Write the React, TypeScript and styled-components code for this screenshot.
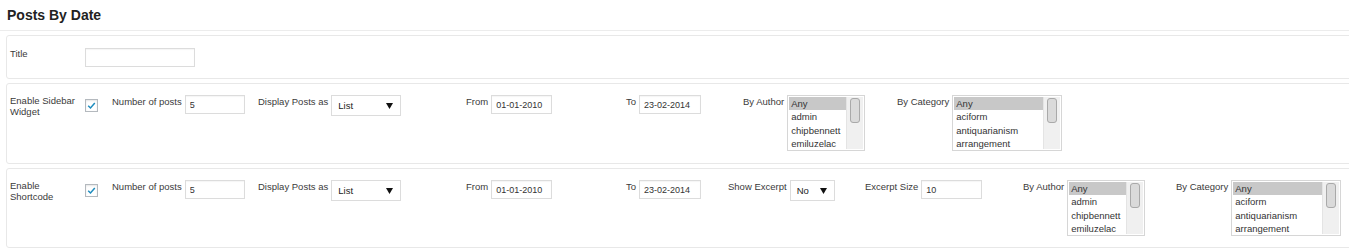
import React from "react";
import styled, { createGlobalStyle } from "styled-components";

const GlobalStyle = createGlobalStyle`
  html, body {
    margin: 0;
    padding: 0;
    background: #fff;
    overflow: hidden;
  }
  body {
    font-family: "Liberation Sans", Arial, sans-serif;
    color: #333;
  }
`;

const Page = styled.div`
  width: 100%;
`;

const Heading = styled.h2`
  margin: 0;
  height: 30px;
  line-height: 30px;
  padding-left: 7px;
  font-size: 14px;
  font-weight: bold;
  color: #222;
  border-bottom: 1px solid #ececec;
`;

const Panels = styled.div`
  display: flex;
  flex-direction: column;
  gap: 4px;
  padding: 4px 0 0 6px;
`;

const Panel = styled.div<{ $top: number; $bottom: number }>`
  width: 1370px;
  box-sizing: border-box;
  border: 1px solid #e8e8e8;
  border-radius: 3px;
  padding: ${(p) => p.$top}px 0 ${(p) => p.$bottom}px 3px;
  display: flex;
  align-items: flex-start;
`;

const RowLabel = styled.div`
  flex: 0 0 75px;
  width: 75px;
  padding-right: 5px;
  box-sizing: border-box;
  font-size: 9.5px;
  line-height: 10.7px;
  padding-top: 1px;
  color: #3a3a3a;
`;

const CheckCell = styled.div`
  flex: 0 0 27px;
  padding-top: 4px;
`;

const CheckBox = styled.span`
  display: flex;
  align-items: center;
  justify-content: center;
  width: 13px;
  height: 13px;
  box-sizing: border-box;
  border: 1px solid #b4b9be;
  background: #fff;
  box-shadow: inset 0 1px 2px rgba(0, 0, 0, 0.1);
`;

const Field = styled.div<{ $w?: number }>`
  display: flex;
  align-items: flex-start;
  gap: 3px;
  ${(p) => (p.$w ? `flex: 0 0 ${p.$w}px;` : "flex: 1 1 auto;")}
`;

const FieldLabel = styled.span`
  font-size: 9.5px;
  line-height: 11px;
  padding-top: 1px;
  white-space: nowrap;
  color: #3a3a3a;
`;

const TextInput = styled.input<{ $w: number }>`
  width: ${(p) => p.$w}px;
  height: 19px;
  box-sizing: border-box;
  margin: 0;
  padding: 0 4px;
  border: 1px solid #dcdcdc;
  box-shadow: inset 0 1px 1px rgba(0, 0, 0, 0.04);
  font-family: "Liberation Sans", Arial, sans-serif;
  font-size: 9px;
  color: #333;
  outline: none;
  background: #fff;
`;

const SelectBox = styled.div<{ $w: number }>`
  width: ${(p) => p.$w}px;
  height: 21px;
  box-sizing: border-box;
  border: 1px solid #dcdcdc;
  display: flex;
  align-items: center;
  justify-content: space-between;
  padding: 0 7px 0 6px;
  font-size: 9.5px;
  color: #222;
  background: #fff;
`;

const ListBox = styled.div<{ $w: number }>`
  width: ${(p) => p.$w}px;
  height: 56px;
  box-sizing: border-box;
  border: 1px solid #d6d6d6;
  padding: 1px;
  display: flex;
  background: #fff;
`;

const Options = styled.div`
  flex: 1 1 auto;
  display: flex;
  flex-direction: column;
`;

const Option = styled.div<{ $selected?: boolean }>`
  height: 13.3px;
  line-height: 13.3px;
  padding-left: 2px;
  font-size: 9.5px;
  color: #333;
  white-space: nowrap;
  background: ${(p) => (p.$selected ? "#c8c8c8" : "transparent")};
`;

const ScrollTrack = styled.div`
  flex: 0 0 16px;
  background: #f0f0f0;
  border-left: 1px solid #e4e4e4;
  display: flex;
  justify-content: center;
  padding-top: 1px;
`;

const ScrollThumb = styled.div`
  width: 10px;
  height: 25px;
  box-sizing: border-box;
  border: 1px solid #a9a9a9;
  border-radius: 3px;
  background: #dadada;
`;

const Check = () => (
  <svg width="9" height="9" viewBox="0 0 9 9">
    <polyline points="1.2,4.8 3.5,7 7.8,2" fill="none" stroke="#1e8cbe" strokeWidth="1.5" />
  </svg>
);

const Arrow = () => (
  <svg width="7" height="6" viewBox="0 0 7 6">
    <polygon points="0,0 7,0 3.5,6" fill="#111" />
  </svg>
);

const Select = ({ w, value }: { w: number; value: string }) => (
  <SelectBox $w={w}>
    <span>{value}</span>
    <Arrow />
  </SelectBox>
);

const List = ({ w, items }: { w: number; items: string[] }) => (
  <ListBox $w={w}>
    <Options>
      {items.map((it, i) => (
        <Option key={it} $selected={i === 0}>
          {it}
        </Option>
      ))}
    </Options>
    <ScrollTrack>
      <ScrollThumb />
    </ScrollTrack>
  </ListBox>
);

const authors = ["Any", "admin", "chipbennett", "emiluzelac"];
const categories = ["Any", "aciform", "antiquarianism", "arrangement"];

export default function App() {
  return (
    <Page>
      <GlobalStyle />
      <Heading>Posts By Date</Heading>
      <Panels>
        <Panel $top={12} $bottom={11}>
          <RowLabel>Title</RowLabel>
          <TextInput $w={110} defaultValue="" />
        </Panel>

        <Panel $top={11} $bottom={12}>
          <RowLabel>Enable Sidebar Widget</RowLabel>
          <CheckCell>
            <CheckBox>
              <Check />
            </CheckBox>
          </CheckCell>
          <Field $w={146}>
            <FieldLabel>Number of posts</FieldLabel>
            <TextInput $w={60} defaultValue="5" />
          </Field>
          <Field $w={208}>
            <FieldLabel>Display Posts as</FieldLabel>
            <Select w={70} value="List" />
          </Field>
          <Field $w={160}>
            <FieldLabel>From</FieldLabel>
            <TextInput $w={61} defaultValue="01-01-2010" />
          </Field>
          <Field $w={117}>
            <FieldLabel>To</FieldLabel>
            <TextInput $w={62} defaultValue="23-02-2014" />
          </Field>
          <Field $w={154}>
            <FieldLabel>By Author</FieldLabel>
            <List w={78} items={authors} />
          </Field>
          <Field>
            <FieldLabel>By Category</FieldLabel>
            <List w={110} items={categories} />
          </Field>
        </Panel>

        <Panel $top={11} $bottom={11}>
          <RowLabel>Enable Shortcode</RowLabel>
          <CheckCell>
            <CheckBox>
              <Check />
            </CheckBox>
          </CheckCell>
          <Field $w={146}>
            <FieldLabel>Number of posts</FieldLabel>
            <TextInput $w={60} defaultValue="5" />
          </Field>
          <Field $w={208}>
            <FieldLabel>Display Posts as</FieldLabel>
            <Select w={70} value="List" />
          </Field>
          <Field $w={160}>
            <FieldLabel>From</FieldLabel>
            <TextInput $w={61} defaultValue="01-01-2010" />
          </Field>
          <Field $w={102}>
            <FieldLabel>To</FieldLabel>
            <TextInput $w={62} defaultValue="23-02-2014" />
          </Field>
          <Field $w={137}>
            <FieldLabel>Show Excerpt</FieldLabel>
            <Select w={45} value="No" />
          </Field>
          <Field $w={158}>
            <FieldLabel>Excerpt Size</FieldLabel>
            <TextInput $w={61} defaultValue="10" />
          </Field>
          <Field $w={153}>
            <FieldLabel>By Author</FieldLabel>
            <List w={78} items={authors} />
          </Field>
          <Field>
            <FieldLabel>By Category</FieldLabel>
            <List w={110} items={categories} />
          </Field>
        </Panel>
      </Panels>
    </Page>
  );
}
